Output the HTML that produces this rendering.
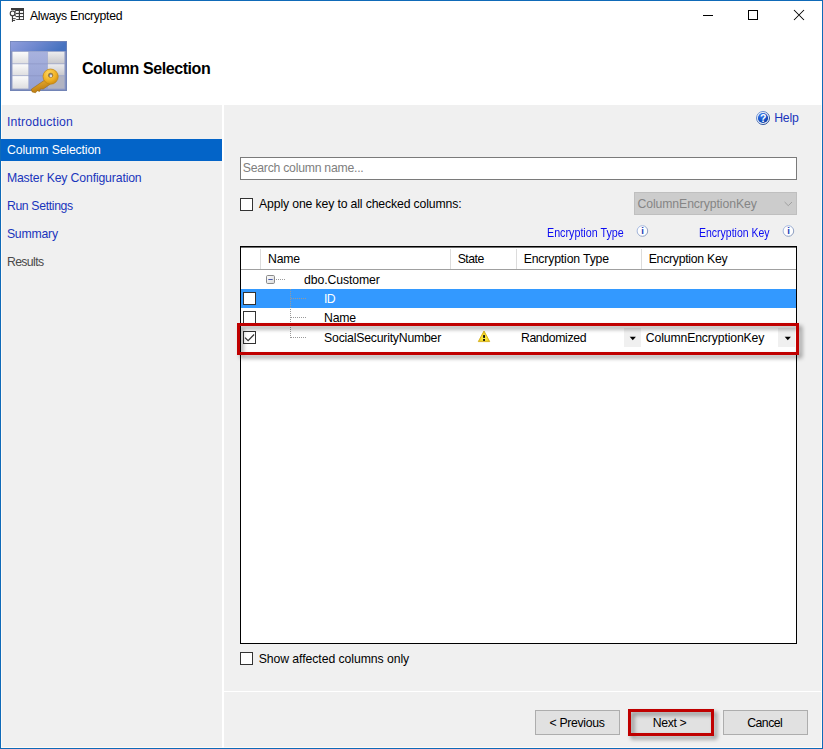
<!DOCTYPE html>
<html><head><meta charset="utf-8">
<style>
*{box-sizing:border-box;margin:0;padding:0}
html,body{width:823px;height:749px;overflow:hidden;background:#fff}
body{font-family:"Liberation Sans",sans-serif;font-size:12.25px;color:#000;position:relative}
.abs{position:absolute}
#win{position:absolute;left:0;top:0;width:823px;height:749px;border:1px solid #0f6ab8;background:#fefaf6}
#side{left:2px;top:105px;width:220px;height:642px;background:#f0f0f0}
#main{left:224px;top:105px;width:597px;height:642px;background:#f0f0f0}
.t{position:absolute;white-space:nowrap}
.cb{position:absolute;width:13px;height:13px;border:1px solid #333;background:#fff}
.btn{position:absolute;height:25px;border:1px solid #adadad;background:#e1e1e1}
.red{position:absolute;border:3px solid #c00000;filter:drop-shadow(3px 3px 2px rgba(0,0,0,0.42))}
.dot{position:absolute;background-image:linear-gradient(to right,#9a9a9a 50%,rgba(255,255,255,0) 50%);background-size:2px 1px;height:1px}
.vdot{position:absolute;background-image:linear-gradient(to bottom,#9a9a9a 50%,rgba(255,255,255,0) 50%);background-size:1px 2px;width:1px}
</style></head><body>
<div id="win"></div>
<div class="abs" style="left:1px;top:1px;width:821px;height:104px;background:#fff"></div>
<div class="abs" style="left:222px;top:105px;width:2px;height:643px;background:#fff"></div>
<!-- title bar icon -->
<svg class="abs" style="left:8px;top:6px" width="18" height="18" viewBox="8 6 18 18">
 <rect x="11" y="8" width="13" height="12" fill="#3a3a3a"/>
 <g fill="#fff">
  <rect x="16" y="11" width="2.800" height="1.900"/><rect x="20" y="11" width="3.100" height="1.900"/>
  <rect x="16" y="14.100" width="2.800" height="1.900"/><rect x="20" y="14.100" width="3.100" height="1.900"/>
  <rect x="16" y="17.100" width="2.800" height="2"/><rect x="20" y="17.100" width="3.100" height="2"/>
  <rect x="9" y="10.300" width="6.200" height="13"/>
  <rect x="15" y="16.500" width="1.200" height="4"/>
  <circle cx="12.400" cy="13.400" r="3.200"/>
 </g>
 <circle cx="12.600" cy="13.400" r="2.350" fill="#fff" stroke="#3a3a3a" stroke-width="1.150"/>
 <g fill="#3a3a3a">
  <rect x="11.900" y="15.900" width="1.100" height="6"/>
  <rect x="12.500" y="18.200" width="3.200" height="0.950"/>
  <rect x="12.500" y="20" width="2.600" height="0.950"/>
 </g>
</svg>
<svg class="abs" style="left:690px;top:0" width="130" height="32" viewBox="690 0 130 32">
 <path d="M703 15.500h10" stroke="#000" stroke-width="1"/>
 <rect x="748.500" y="10.500" width="9" height="9" fill="none" stroke="#000" stroke-width="1"/>
 <path d="M794 10l10 10M804 10l-10 10" stroke="#000" stroke-width="1.050"/>
</svg>
<!-- header icon -->
<svg class="abs" style="left:9px;top:40px" width="60" height="56" viewBox="9 40 60 56">
 <defs>
  <linearGradient id="g1" x1="0" y1="0" x2="1" y2="0.200"><stop offset="0" stop-color="#909edb"/><stop offset="0.500" stop-color="#6f88cf"/><stop offset="1" stop-color="#4672c0"/></linearGradient>
  <linearGradient id="g2" x1="0" y1="0" x2="0" y2="1"><stop offset="0" stop-color="#fbfbfb"/><stop offset="1" stop-color="#dedee0"/></linearGradient>
  <linearGradient id="g2b" x1="0" y1="0" x2="0" y2="1"><stop offset="0" stop-color="#ececee"/><stop offset="1" stop-color="#c8c8cc"/></linearGradient>
  <linearGradient id="g4" x1="0" y1="0" x2="0" y2="1"><stop offset="0" stop-color="#a8b2de"/><stop offset="1" stop-color="#939fd2"/></linearGradient>
  <radialGradient id="g3" cx="0.400" cy="0.300" r="0.800"><stop offset="0" stop-color="#ffd862"/><stop offset="0.600" stop-color="#eeae22"/><stop offset="1" stop-color="#c4820e"/></radialGradient>
  <linearGradient id="g5" x1="0" y1="0" x2="0.400" y2="1"><stop offset="0" stop-color="#f2b838"/><stop offset="1" stop-color="#b87810"/></linearGradient>
 </defs>
 <rect x="10" y="41" width="57" height="50" fill="#7284b6"/>
 <rect x="10.700" y="41.800" width="55.600" height="9.400" fill="url(#g1)"/>
 <rect x="11.500" y="51.200" width="54" height="38.400" fill="#95a0c8"/>
 <rect x="28.700" y="51.600" width="18.800" height="37.400" fill="url(#g4)"/>
 <g fill="url(#g2)">
  <rect x="12.500" y="51.800" width="15.900" height="11.700"/><rect x="12.500" y="64.200" width="15.900" height="11.200"/><rect x="12.500" y="76.100" width="15.900" height="12.500"/>
 </g>
 <g fill="url(#g2b)">
  <rect x="47.800" y="51.800" width="16.600" height="11.700"/><rect x="47.800" y="64.200" width="16.600" height="11.200"/>
 </g>
 <rect x="47.800" y="76.100" width="16.600" height="12.500" fill="#b2b4c2"/>
 <path d="M28.700 63.850h18.800M28.700 75.750h18.800" stroke="#8a94c4" stroke-width="0.700"/>
 <g>
  <path d="M45.500 79.500L31.400 89.200l0.700 2.700 3.400 0.900 1.700-2.100 2.400 0.700 0.900-2.600 2.700 0.300 6.800-4.800z" fill="url(#g5)" stroke="#a06a0c" stroke-width="0.600"/>
  <circle cx="50.600" cy="76.600" r="7.600" fill="url(#g3)" stroke="#bf8412" stroke-width="0.700"/>
  <circle cx="50.600" cy="75.300" r="2.300" fill="#77777c" stroke="#a87410" stroke-width="0.600"/>
  <circle cx="50.900" cy="75.900" r="1.300" fill="#dcdce4"/>
 </g>
</svg>

<div id="side" class="abs"></div>
<div id="main" class="abs"></div>
<div class="abs" style="left:1px;top:139px;width:221px;height:22px;background:#0364c8"></div>

<!-- help icon -->
<svg class="abs" style="left:755px;top:110px" width="16" height="16" viewBox="755 110 16 16">
 <defs>
  <linearGradient id="hr" x1="0" y1="0" x2="1" y2="1"><stop offset="0" stop-color="#86a8e4"/><stop offset="1" stop-color="#0e3484"/></linearGradient>
  <radialGradient id="hg" cx="0.350" cy="0.250" r="0.900"><stop offset="0" stop-color="#3c7cec"/><stop offset="0.600" stop-color="#1450c4"/><stop offset="1" stop-color="#0a3494"/></radialGradient>
 </defs>
 <circle cx="763" cy="118" r="6.500" fill="#eef3fb" stroke="url(#hr)" stroke-width="1"/>
 <circle cx="763" cy="118" r="5.100" fill="url(#hg)"/>
 <text x="763.100" y="121.800" text-anchor="middle" font-family="Liberation Sans, sans-serif" font-weight="bold" font-size="10.500" fill="#fff">?</text>
</svg>

<!-- search -->
<div class="abs" style="left:240px;top:157px;width:557px;height:23px;border:1px solid #7a7a7a;background:#fff"></div>
<div class="cb" style="left:240px;top:198px"></div>
<div class="abs" style="left:634px;top:192px;width:163px;height:23px;border:1px solid #bfbfbf;background:#cccccc"></div>
<svg class="abs" style="left:783px;top:200px" width="11" height="8" viewBox="783 200 11 8"><path d="M784.600 202l3.700 3.700 3.700-3.700" fill="none" stroke="#a0a0a0" stroke-width="1"/></svg>

<svg class="abs" style="left:0;top:0" width="1" height="1"><defs><linearGradient id="ir" x1="0" y1="0" x2="1" y2="1"><stop offset="0" stop-color="#aec2ea"/><stop offset="1" stop-color="#8494b4"/></linearGradient></defs></svg>
<svg class="abs" style="left:634px;top:224px" width="15" height="15" viewBox="634 224 15 15"><circle cx="642.4" cy="231" r="5.300" fill="#fdfdfe" stroke="url(#ir)" stroke-width="1"/><text x="642.5" y="234.300" text-anchor="middle" font-family="Liberation Sans, sans-serif" font-weight="bold" font-size="9.500" fill="#2040b4">i</text></svg>
<svg class="abs" style="left:780px;top:224px" width="15" height="15" viewBox="780 224 15 15"><circle cx="788.4" cy="231" r="5.300" fill="#fdfdfe" stroke="url(#ir)" stroke-width="1"/><text x="788.5" y="234.300" text-anchor="middle" font-family="Liberation Sans, sans-serif" font-weight="bold" font-size="9.500" fill="#2040b4">i</text></svg>

<!-- grid -->
<div class="abs" style="left:240px;top:246px;width:557px;height:398px;border:1px solid #000;background:#fff"></div>
<div class="abs" style="left:241px;top:247px;width:555px;height:1px;background:#707070"></div>
<div class="abs" style="left:241px;top:269px;width:555px;height:1px;background:#a0a0a0"></div>
<div class="abs" style="left:260px;top:249px;width:1px;height:20px;background:#dcdcdc"></div>
<div class="abs" style="left:450px;top:249px;width:1px;height:20px;background:#dcdcdc"></div>
<div class="abs" style="left:516px;top:249px;width:1px;height:20px;background:#dcdcdc"></div>
<div class="abs" style="left:641px;top:249px;width:1px;height:20px;background:#dcdcdc"></div>

<!-- rows -->
<div class="abs" style="left:241px;top:289px;width:555px;height:19px;background:#3399ff"></div>
<svg class="abs" style="left:265px;top:274px" width="12" height="12" viewBox="265 274 12 12">
 <defs><linearGradient id="xg" x1="0" y1="0" x2="1" y2="1"><stop offset="0" stop-color="#fff"/><stop offset="1" stop-color="#d8d8d8"/></linearGradient></defs>
 <rect x="266.500" y="275.500" width="8" height="8" rx="1.200" fill="url(#xg)" stroke="#8a8a8a" stroke-width="1"/>
 <path d="M268.300 279.500h4.400" stroke="#4456a8" stroke-width="1"/>
</svg>
<div class="dot" style="left:276px;top:279px;width:9px"></div>
<div class="vdot" style="left:290px;top:289px;height:49px"></div>
<div class="dot" style="left:291px;top:298px;width:15px"></div>
<div class="dot" style="left:291px;top:317px;width:15px"></div>
<div class="dot" style="left:291px;top:337px;width:15px"></div>
<div class="cb" style="left:243px;top:292px"></div>
<div class="cb" style="left:243px;top:311px"></div>
<div class="cb" style="left:243px;top:331px"></div>
<svg class="abs" style="left:243px;top:331px" width="13" height="13" viewBox="0 0 13 13"><path d="M2 6.600l3.100 3.100 6-6.200" fill="none" stroke="#333" stroke-width="1.200"/></svg>
<!-- warning -->
<svg class="abs" style="left:476px;top:329px" width="16" height="15" viewBox="476 329 16 15">
 <defs><radialGradient id="wg" cx="0.500" cy="0.650" r="0.600"><stop offset="0" stop-color="#fff24a"/><stop offset="0.700" stop-color="#f2d322"/><stop offset="1" stop-color="#d4aa12"/></radialGradient></defs>
 <path d="M484 331L489.700 341.600h-11.400z" fill="url(#wg)" stroke="#d6b01a" stroke-width="0.900" stroke-linejoin="round"/>
 <rect x="483.100" y="335.100" width="1.900" height="2.800" fill="#111"/>
 <rect x="483.100" y="339" width="1.900" height="1.900" fill="#111"/>
</svg>
<!-- dropdown arrows -->
<div class="abs" style="left:624px;top:328px;width:17px;height:19px;background:#f0f0f0"></div>
<svg class="abs" style="left:629px;top:336px" width="8" height="5" viewBox="0 0 8 5"><path d="M0.700 0.800h6.200l-3.100 3.400z" fill="#000"/></svg>
<div class="abs" style="left:778px;top:328px;width:17px;height:19px;background:#f0f0f0"></div>
<svg class="abs" style="left:784px;top:336px" width="8" height="5" viewBox="0 0 8 5"><path d="M0.700 0.800h6.200l-3.100 3.400z" fill="#000"/></svg>

<div class="cb" style="left:240px;top:652px"></div>
<div class="abs" style="left:224px;top:691px;width:597px;height:1px;background:#fff"></div>
<div class="btn" style="left:535px;top:710px;width:85px"></div>
<div class="btn" style="left:629px;top:710px;width:85px"></div>
<div class="btn" style="left:723px;top:710px;width:85px"></div>

<div class="t" style="left:30.0px;top:8px;color:#000;font-size:12.25px;line-height:16px;letter-spacing:-0.325px;font-family:'Liberation Sans',sans-serif;font-weight:normal">Always Encrypted</div>
<div class="t" style="left:81.9px;top:58px;color:#000;font-size:16px;line-height:22px;letter-spacing:-0.422px;font-family:'Liberation Sans',sans-serif;font-weight:bold">Column Selection</div>
<div class="t" style="left:6.9px;top:114px;color:#1a35bc;font-size:12.25px;line-height:16px;letter-spacing:0.180px;font-family:'Liberation Sans',sans-serif;font-weight:normal">Introduction</div>
<div class="t" style="left:7.1px;top:142px;color:#fff;font-size:12.25px;line-height:16px;letter-spacing:-0.148px;font-family:'Liberation Sans',sans-serif;font-weight:normal">Column Selection</div>
<div class="t" style="left:6.9px;top:170px;color:#1a35bc;font-size:12.25px;line-height:16px;letter-spacing:-0.149px;font-family:'Liberation Sans',sans-serif;font-weight:normal">Master Key Configuration</div>
<div class="t" style="left:6.9px;top:198px;color:#1a35bc;font-size:12.25px;line-height:16px;letter-spacing:-0.349px;font-family:'Liberation Sans',sans-serif;font-weight:normal">Run Settings</div>
<div class="t" style="left:6.9px;top:226px;color:#1a35bc;font-size:12.25px;line-height:16px;letter-spacing:-0.204px;font-family:'Liberation Sans',sans-serif;font-weight:normal">Summary</div>
<div class="t" style="left:6.9px;top:254px;color:#4a4a4a;font-size:12.25px;line-height:16px;letter-spacing:-0.610px;font-family:'Liberation Sans',sans-serif;font-weight:normal">Results</div>
<div class="t" style="left:774.2px;top:110px;color:#1a35bc;font-size:12.25px;line-height:16px;letter-spacing:-0.201px;font-family:'Liberation Sans',sans-serif;font-weight:normal">Help</div>
<div class="t" style="left:242.8px;top:160px;color:#808080;font-size:12.25px;line-height:16px;letter-spacing:-0.253px;font-family:'Liberation Sans',sans-serif;font-weight:normal">Search column name...</div>
<div class="t" style="left:259.1px;top:196px;color:#000;font-size:12.25px;line-height:16px;letter-spacing:-0.144px;font-family:'Liberation Sans',sans-serif;font-weight:normal">Apply one key to all checked columns:</div>
<div class="t" style="left:637.5px;top:196px;color:#858585;font-size:12.25px;line-height:16px;letter-spacing:-0.106px;font-family:'Liberation Sans',sans-serif;font-weight:normal">ColumnEncryptionKey</div>
<div class="t" style="left:547.0px;top:225px;color:#0c0cf2;font-size:12.2px;line-height:16px;letter-spacing:0.000px;font-family:'Liberation Sans',sans-serif;font-weight:normal;transform:scaleX(0.8799);transform-origin:0 50%">Encryption Type</div>
<div class="t" style="left:699.0px;top:225px;color:#0c0cf2;font-size:12.2px;line-height:16px;letter-spacing:0.000px;font-family:'Liberation Sans',sans-serif;font-weight:normal;transform:scaleX(0.8613);transform-origin:0 50%">Encryption Key</div>
<div class="t" style="left:268.1px;top:251px;color:#000;font-size:12.25px;line-height:16px;letter-spacing:-0.229px;font-family:'Liberation Sans',sans-serif;font-weight:normal">Name</div>
<div class="t" style="left:457.7px;top:251px;color:#000;font-size:12.25px;line-height:16px;letter-spacing:-0.502px;font-family:'Liberation Sans',sans-serif;font-weight:normal">State</div>
<div class="t" style="left:523.7px;top:251px;color:#000;font-size:12.25px;line-height:16px;letter-spacing:-0.159px;font-family:'Liberation Sans',sans-serif;font-weight:normal">Encryption Type</div>
<div class="t" style="left:648.7px;top:251px;color:#000;font-size:12.25px;line-height:16px;letter-spacing:-0.269px;font-family:'Liberation Sans',sans-serif;font-weight:normal">Encryption Key</div>
<div class="t" style="left:304.1px;top:272px;color:#000;font-size:12.25px;line-height:16px;letter-spacing:-0.114px;font-family:'Liberation Sans',sans-serif;font-weight:normal">dbo.Customer</div>
<div class="t" style="left:324.1px;top:291px;color:#fff;font-size:12.25px;line-height:16px;letter-spacing:-0.700px;font-family:'Liberation Sans',sans-serif;font-weight:normal">ID</div>
<div class="t" style="left:324.1px;top:310px;color:#000;font-size:12.25px;line-height:16px;letter-spacing:-0.229px;font-family:'Liberation Sans',sans-serif;font-weight:normal">Name</div>
<div class="t" style="left:324.1px;top:330px;color:#000;font-size:12.25px;line-height:16px;letter-spacing:-0.210px;font-family:'Liberation Sans',sans-serif;font-weight:normal">SocialSecurityNumber</div>
<div class="t" style="left:520.9px;top:330px;color:#000;font-size:12.25px;line-height:16px;letter-spacing:-0.353px;font-family:'Liberation Sans',sans-serif;font-weight:normal">Randomized</div>
<div class="t" style="left:645.8px;top:330px;color:#000;font-size:12.25px;line-height:16px;letter-spacing:-0.145px;font-family:'Liberation Sans',sans-serif;font-weight:normal">ColumnEncryptionKey</div>
<div class="t" style="left:258.7px;top:651px;color:#000;font-size:12.25px;line-height:16px;letter-spacing:-0.072px;font-family:'Liberation Sans',sans-serif;font-weight:normal">Show affected columns only</div>
<div class="t" style="left:549.5px;top:715px;color:#000;font-size:12.25px;line-height:16px;letter-spacing:-0.324px;font-family:'Liberation Sans',sans-serif;font-weight:normal">&lt; Previous</div>
<div class="t" style="left:652.8px;top:715px;color:#000;font-size:12.25px;line-height:16px;letter-spacing:-0.370px;font-family:'Liberation Sans',sans-serif;font-weight:normal">Next &gt;</div>
<div class="t" style="left:747.2px;top:715px;color:#000;font-size:12.25px;line-height:16px;letter-spacing:-0.508px;font-family:'Liberation Sans',sans-serif;font-weight:normal">Cancel</div>

<!-- red highlights -->
<div class="red" style="left:237px;top:323px;width:562px;height:32px"></div>
<div class="red" style="left:628px;top:709px;width:86px;height:27px"></div>
</body></html>
